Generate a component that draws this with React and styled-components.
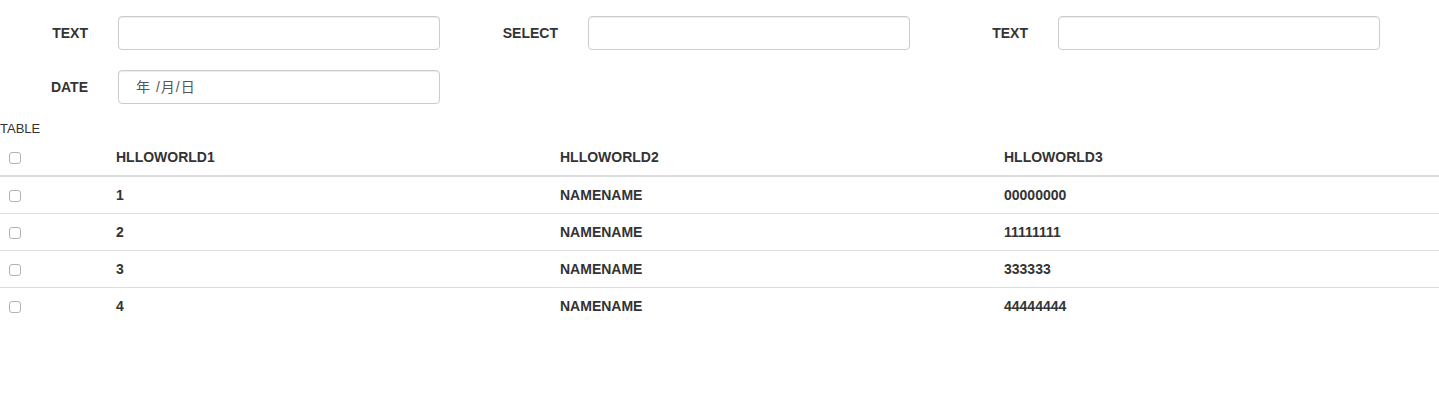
import React from "react";
import styled, { createGlobalStyle } from "styled-components";

const GlobalStyle = createGlobalStyle`
  body {
    margin: 0;
    background: #fff;
    font-family: "Liberation Sans", Arial, "Noto Sans CJK JP", sans-serif;
    font-size: 14px;
    line-height: 20px;
    color: #333;
  }
`;

const Form = styled.form`
  display: grid;
  grid-template-columns: repeat(3, 470px);
  row-gap: 20px;
  padding-top: 16px;
  margin-bottom: 15px;
`;

const FormGroup = styled.div`
  display: grid;
  grid-template-columns: 88px 322px;
  column-gap: 30px;
  align-items: center;
`;

const Label = styled.label`
  text-align: right;
  font-weight: bold;
  font-size: 14px;
`;

const Input = styled.input`
  box-sizing: border-box;
  width: 100%;
  height: 34px;
  padding: 6px ${(p) => (p.$date ? "17px" : "12px")};
  border: 1px solid #ccc;
  border-radius: 4px;
  box-shadow: inset 0 1px 1px rgba(0, 0, 0, 0.075);
  background: #fff;
  font-family: "Liberation Sans", "Noto Sans CJK JP", sans-serif;
  font-size: 14px;
  letter-spacing: ${(p) => (p.$date ? "1px" : "0")};
  color: #555;
  outline: none;

  &::placeholder {
    color: #555;
  }
`;

const Caption = styled.div`
  font-size: 13px;
  line-height: 20px;
  height: 20px;
`;

const Table = styled.table`
  width: 100%;
  table-layout: fixed;
  border-collapse: collapse;
`;

const Th = styled.th`
  text-align: left;
  padding: 8px;
  line-height: 20px;
  font-weight: bold;
  border-bottom: 2px solid #ddd;
  vertical-align: middle;
`;

const Td = styled.td`
  padding: 8px;
  line-height: 20px;
  font-weight: bold;
  border-top: 1px solid #ddd;
  vertical-align: middle;
`;

const Check = styled.input.attrs({ type: "checkbox" })`
  appearance: none;
  display: block;
  box-sizing: border-box;
  width: 12px;
  height: 12px;
  margin: 1px 0 0 1px;
  border: 1px solid #b3b3b3;
  border-radius: 3px;
  background: #fff;
`;

const rows = [
  { id: 1, name: "NAMENAME", code: "00000000" },
  { id: 2, name: "NAMENAME", code: "11111111" },
  { id: 3, name: "NAMENAME", code: "333333" },
  { id: 4, name: "NAMENAME", code: "44444444" },
];

const App = () => {
  return (
    <>
      <GlobalStyle />
      <Form onSubmit={(e) => e.preventDefault()}>
        <FormGroup>
          <Label>TEXT</Label>
          <Input type="text" />
        </FormGroup>
        <FormGroup>
          <Label>SELECT</Label>
          <Input type="text" />
        </FormGroup>
        <FormGroup>
          <Label>TEXT</Label>
          <Input type="text" />
        </FormGroup>
        <FormGroup>
          <Label>DATE</Label>
          <Input type="text" $date placeholder="年 /月/日" />
        </FormGroup>
      </Form>
      <Caption>TABLE</Caption>
      <Table>
        <colgroup>
          <col style={{ width: 108 }} />
          <col style={{ width: 444 }} />
          <col style={{ width: 444 }} />
          <col />
        </colgroup>
        <thead>
          <tr>
            <Th>
              <Check />
            </Th>
            <Th>HLLOWORLD1</Th>
            <Th>HLLOWORLD2</Th>
            <Th>HLLOWORLD3</Th>
          </tr>
        </thead>
        <tbody>
          {rows.map((r) => (
            <tr key={r.id}>
              <Td>
                <Check />
              </Td>
              <Td>{r.id}</Td>
              <Td>{r.name}</Td>
              <Td>{r.code}</Td>
            </tr>
          ))}
        </tbody>
      </Table>
    </>
  );
};

export default App;
